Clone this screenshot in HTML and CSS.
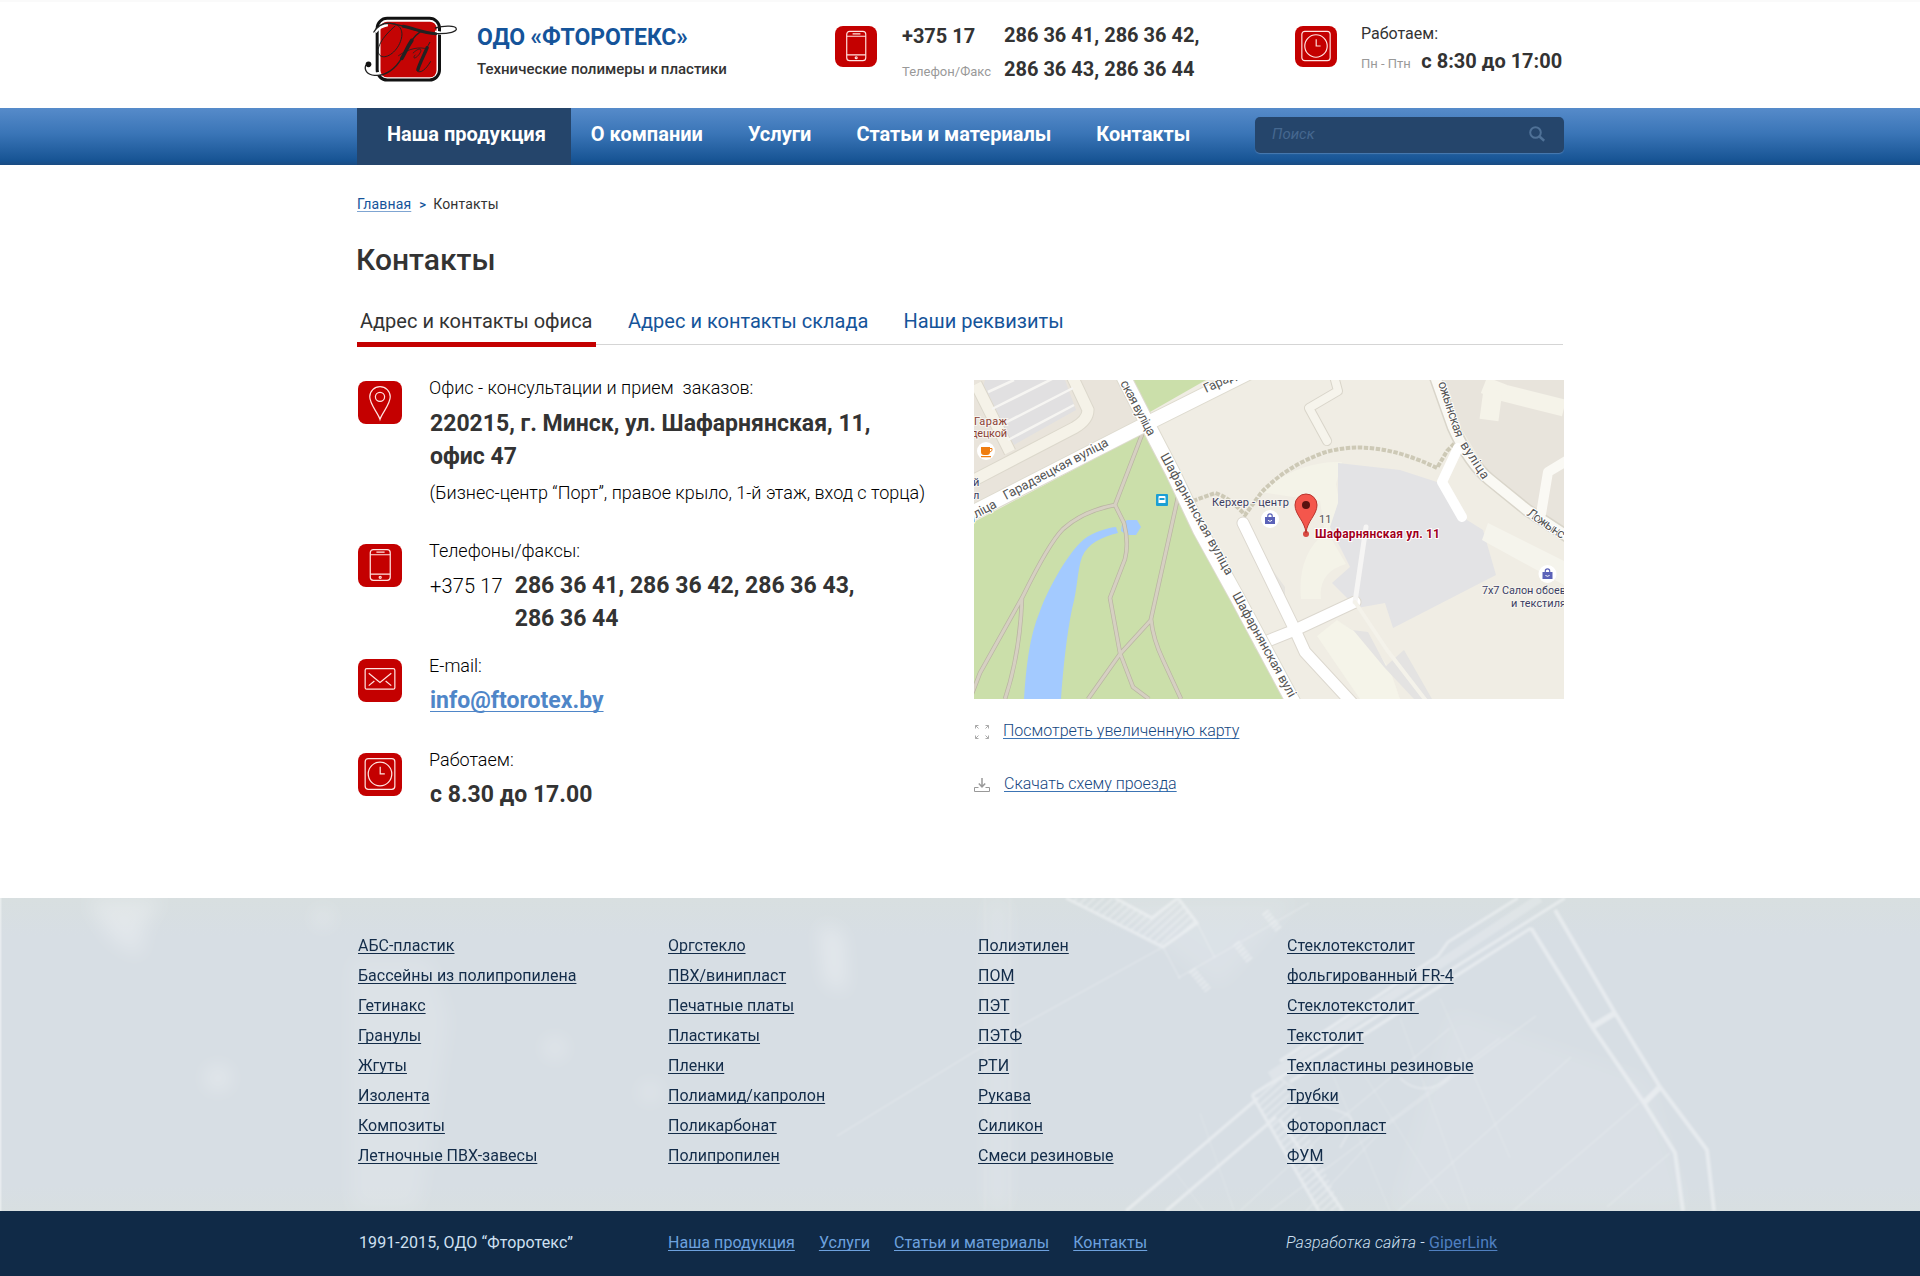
FILE: index.html
```html
<!DOCTYPE html>
<html lang="ru">
<head>
<meta charset="utf-8">
<title>Контакты — ОДО «Фторотекс»</title>
<link rel="stylesheet" href="styles.css">
</head>
<body>
<svg class="sprite" width="0" height="0">
  <symbol id="i-phone" viewBox="0 0 42 42">
    <rect x="11.5" y="5.5" width="19.500" height="30" rx="3"/>
    <path d="M11.500 10.500h19.500M11.500 29.500h19.500M17.500 8h8"/>
    <circle cx="21.200" cy="32.500" r="1"/>
  </symbol>
  <symbol id="i-clock" viewBox="0 0 42 42">
    <rect x="6.500" y="5.500" width="29" height="30" rx="3"/>
    <circle cx="21" cy="20.500" r="11.500"/>
    <path d="M21.200 13.500v7h4.500"/>
  </symbol>
  <symbol id="i-pin" viewBox="0 0 42 42">
    <path d="M21 37.500C19 31 11 23 11 15.500a10 10 0 0 1 20 0C31 23 23 31 21 37.500z"/>
    <circle cx="21" cy="15.500" r="4.500"/>
  </symbol>
  <symbol id="i-mail" viewBox="0 0 42 42">
    <rect x="6.500" y="9.500" width="29" height="20" rx="1.500"/>
    <path d="M10 14l11 9 11-9M10 26l5.500-4.500M32 26l-5.500-4.500"/>
  </symbol>
  <symbol id="i-bag" viewBox="0 0 12 12">
    <path d="M3.800 5V3.500a2.200 2.200 0 0 1 4.400 0V5" fill="none" stroke="#5b62b8" stroke-width="1.200"/>
    <path d="M1 4.500h10v7H1z" fill="#5b62b8"/>
    <path d="M4 7.500c.8 1.700 3.200 1.700 4 0" fill="none" stroke="#fff"/>
  </symbol>
</svg>

<header class="header">
  <div class="wrap header__row">
    <div class="brand">
      <svg class="brand__logo" viewBox="70 40 290 210" fill="none">
        <rect x="112" y="56" width="187" height="185" rx="30" stroke="#111" stroke-width="9"/>
        <rect x="122" y="66" width="168" height="167" rx="20" fill="#c40404"/>
        <g stroke="#fff" stroke-width="9">
          <path d="M106 97q14-18 38-22M285 97q46 12 62-8M80 195c-4 22 12 32 40 26"/>
        </g>
        <g stroke="#222" stroke-linecap="round">
          <path d="M102 97q18-29 50-26c50 6 82 30 138 31 38 1 64-6 59-16-5-11-42-6-62-1" stroke-width="4"/>
          <path d="M190 80c35 6 58 20 98 22" stroke-width="9"/>
          <path d="M150 71c36 0 42 28 32 54-12 34-46 56-62 42-16-18 8-56 46-88" stroke-width="3"/>
          <path d="M242 96c-28 18-44 54-56 78-18 34-50 56-82 53-22-2-32-16-26-30" stroke-width="4"/>
          <path d="M216 122c-14 20-18 34-30 54" stroke-width="11"/>
          <path d="M270 128c-14 26-32 62-38 86 10 8 26-4 40-28" stroke-width="3"/>
          <path d="M262 144c-10 24-22 46-28 66" stroke-width="10"/>
          <path d="M176 168c30-22 66-28 84-20M220 160c20-20 30-12 18 4s-22 12-12 2" stroke-width="2.500"/>
        </g>
        <circle cx="86" cy="194" r="8.500" fill="#111"/>
      </svg>
      <div class="brand__text">
        <div class="brand__name">ОДО «ФТОРОТЕКС»</div>
        <div class="brand__tagline">Технические полимеры и пластики</div>
      </div>
    </div>
    <div class="hphones">
      <svg class="badge badge--sm"><use href="#i-phone"/></svg>
      <div class="hphones__grid">
        <b class="hphones__code">+375 17</b><b>286 36 41, 286 36 42,</b>
        <small>Телефон/Факс</small><b>286 36 43, 286 36 44</b>
      </div>
    </div>
    <div class="hhours">
      <svg class="badge badge--sm"><use href="#i-clock"/></svg>
      <div class="hhours__text">
        <div class="hhours__label">Работаем:</div>
        <div class="hhours__time"><small>Пн - Птн</small><b>с 8:30 до 17:00</b></div>
      </div>
    </div>
  </div>
</header>

<nav class="nav">
  <div class="wrap nav__row">
    <a class="nav__link nav__link--active" href="#">Наша продукция</a>
    <a class="nav__link" href="#">О компании</a>
    <a class="nav__link" href="#">Услуги</a>
    <a class="nav__link" href="#">Статьи и материалы</a>
    <a class="nav__link" href="#">Контакты</a>
    <form class="search">
      <input class="search__input" type="text" placeholder="Поиск">
      <svg class="search__icon" viewBox="0 0 16 16" fill="none" stroke="#4f7197" stroke-width="2"><circle cx="6.500" cy="6.500" r="5.300"/><path d="M10.500 10.500l4.700 4.200" stroke-width="2.500"/></svg>
    </form>
  </div>
</nav>

<main class="wrap main">
  <div class="crumbs"><a href="#">Главная</a><i>&gt;</i><span>Контакты</span></div>
  <h1 class="title">Контакты</h1>
  <div class="tabs">
    <a class="tabs__item tabs__item--active" href="#">Адрес и контакты офиса</a>
    <a class="tabs__item" href="#">Адрес и контакты склада</a>
    <a class="tabs__item" href="#">Наши реквизиты</a>
  </div>

  <div class="cols">
    <div class="contacts">
      <section class="contact">
        <svg class="badge"><use href="#i-pin"/></svg>
        <div>
          <div class="contact__label">Офис - консультации и прием  заказов:</div>
          <div class="contact__value contact__value--address">220215, г. Минск, ул. Шафарнянская, 11,<br>офис 47</div>
          <div class="contact__note">(Бизнес-центр “Порт”, правое крыло, 1-й этаж, вход с торца)</div>
        </div>
      </section>
      <section class="contact">
        <svg class="badge"><use href="#i-phone"/></svg>
        <div>
          <div class="contact__label">Телефоны/факсы:</div>
          <div class="contact__value contact__value--phones"><span class="contact__code">+375 17</span><span>286 36 41, 286 36 42, 286 36 43,<br>286 36 44</span></div>
        </div>
      </section>
      <section class="contact">
        <svg class="badge"><use href="#i-mail"/></svg>
        <div>
          <div class="contact__label">E-mail:</div>
          <div class="contact__value"><a href="#">info@ftorotex.by</a></div>
        </div>
      </section>
      <section class="contact">
        <svg class="badge"><use href="#i-clock"/></svg>
        <div>
          <div class="contact__label">Работаем:</div>
          <div class="contact__value">с 8.30 до 17.00</div>
        </div>
      </section>
    </div>

    <div class="side">
      <svg class="map" viewBox="0 0 590 319" fill="none">
        <rect width="590" height="319" fill="#f0ede4"/>
        <!-- blocks -->
        <path d="M0 0h150l18 42L0 126z" fill="#e9e4db"/>
        <path d="M466 0h124v152l-40-28-40-38-28-46z" fill="#e8e4dc"/>
        <path d="M0 142L169 53l12 8 138 258H0zM155 0h77l-56 32z" fill="#cbdfaa"/>
        <!-- garages -->
        <path d="M11 0h80l11 30-62 35L8 10z" fill="#e1e0e1"/>
        <path d="M2 4l34 68M0 100l100-52q14-8 14-18L98-4" stroke="#dcd8cc" stroke-width="13"/>
        <path d="M2 4l34 68M0 100l100-52q14-8 14-18L98-4" stroke="#f5f2e8" stroke-width="11"/>
        <path d="M14 12l26-12M18 29l68-34M27 45l72-37M34 60l66-35" stroke="#f6f5f2" stroke-width="2.500"/>
        <!-- right side buildings -->
        <path d="M286 112q40-32 82-30l-6 22 4 22-8 34 14 24q-28 8-25 35h-20q-4-44 24-66l-5-32z" fill="#f4f3e8"/>
        <path d="M364 83l62 7 40 13 27 37 16 10 13 45-103 53-8-25-28 5-25-25 18-16-20-40 8-24z" fill="#e3e3e5"/>
        <path d="M343 256l20-16 34 22 19 28 10 29h-40l-26-38z" fill="#f5f4e9"/>
        <path d="M362 240l16 10 16 2 18 34 18-16 28 49h-18l-30-32-30-36z" fill="#e4e3e2"/>
        <path d="M514 143l76 38v24l-82-45z" fill="#f5f4ec"/>
        <path d="M510 5l20 8 60 15" stroke="#f5f3e9" stroke-width="17"/>
        <path d="M519 10l-4 30" stroke="#f5f3e9" stroke-width="19"/>
        <path d="M275 155l32 60-4 6-28-50zM289 177l22 30v22z" fill="#e6e4df"/>
        <!-- park water and paths -->
        <g fill="#a3caff">
          <path d="M50 319c2-30 5-62 16-88 8-22 26-54 40-68 8-9 25-15 36-16l2 6c-16 4-30 10-36 24-5 14-4 30-10 52-5 24-9 60-11 90z"/>
          <path d="M148 144l5-4h10l4 7-5 8h-9l-6-4z"/>
        </g>
        <path d="M169 52l-28 73 9 18q5 20 1 36l-15 39 10 55 13 34 16 12M141 125q-32 6-52 24-14 14-40 67L6 293l-10 26M48 218q-2 56-17 101M204 117l-27 122q2 20 12 41l18 39M177 240l-31 34-32 45" stroke="#b9b4a2" stroke-width="4.400"/>
        <path d="M169 52l-28 73 9 18q5 20 1 36l-15 39 10 55 13 34 16 12M141 125q-32 6-52 24-14 14-40 67L6 293l-10 26M48 218q-2 56-17 101M204 117l-27 122q2 20 12 41l18 39M177 240l-31 34-32 45" stroke="#d6d0c2" stroke-width="3"/>
        <!-- footpath -->
        <path d="M219 121l22-8q14 4 30 22l16-22q24-26 62-40 50-16 114 15l10-17 10-10" stroke="#cdc9b6" stroke-width="4" stroke-dasharray="4.500 1.500"/>
        <!-- streets -->
        <g stroke-linecap="round" stroke-linejoin="round">
          <path d="M458-12l21 59q16 36 37 53l37 30 46 30" stroke="#d9d5ca" stroke-width="13"/>
          <path d="M458-12l21 59q16 36 37 53l37 30 46 30M594 80l-20 12-7 42" stroke="#faf9f4" stroke-width="10"/>
          <path d="M360-4l4 15-29 17 18 33" stroke="#d9d5ca" stroke-width="10"/>
          <path d="M360-4l4 15-29 17 18 33" stroke="#f6f4ec" stroke-width="8"/>
          <path d="M269 143l52 107 10 22 48 52M286 264l35-14 60-28" stroke="#dcd8cf" stroke-width="13"/>
          <path d="M269 143l52 107 10 22 48 52M286 264l35-14 60-28" stroke="#fff" stroke-width="11"/>
          <path d="M381 222l11-75" stroke="#f6f5f4" stroke-width="5"/>
          <path d="M381 222l32 48 40 52" stroke="#f4f2ea" stroke-width="4"/>
          <path d="M484 68l-16 34 20 35" stroke="#fff" stroke-width="10"/>
          <path d="M-8 136l176-90 110-55M147-8l26 51 26 50 27 57 37 67 60 112" stroke="#dedbcf" stroke-width="16"/>
          <path d="M-8 136l176-90 110-55M147-8l26 51 26 50 27 57 37 67 60 112" stroke="#fff" stroke-width="14"/>
        </g>
        <!-- street names -->
        <g class="map__street">
          <text transform="translate(-3 141) rotate(-28)" textLength="30">уліца</text>
          <text transform="translate(32 120) rotate(-28)" textLength="117">Гарадзецкая вуліца</text>
          <text transform="translate(232 13) rotate(-25)" textLength="34">Гарад</text>
          <text transform="translate(146 3) rotate(62)" textLength="61">ская вуліца</text>
          <text transform="translate(186 76) rotate(61)" textLength="137">Шафарнянская вуліца</text>
          <text transform="translate(258 215) rotate(61)" textLength="118">Шафарнянская вулі</text>
          <text transform="translate(464 3) rotate(72)" textLength="58">ожынская</text>
          <text transform="translate(486 65) rotate(57)" textLength="42">вуліца</text>
          <text transform="translate(552 135) rotate(34)" textLength="43">Ложынс</text>
        </g>
        <!-- points of interest -->
        <g fill="#fff">
          <circle cx="12" cy="71" r="9"/><circle cx="296" cy="139" r="9"/><circle cx="573.500" cy="194" r="9"/>
        </g>
        <path d="M7 67h9v5a3 3 0 0 1-3 3h-3a3 3 0 0 1-3-3zM7 76h10v1.200H7z" fill="#ef7d10"/>
        <path d="M16 68.500h2v2l-2 1.500" stroke="#ef7d10"/>
        <use href="#i-bag" x="290" y="132.500" width="12" height="12"/>
        <use href="#i-bag" x="567.500" y="187.500" width="12" height="12"/>
        <rect x="182" y="114" width="12" height="12" rx="1" fill="#1c9fd4"/>
        <path d="M184.500 117q0-1 1-1h5q1 0 1 1v6h-7z" fill="#fff"/>
        <path d="M185.500 118h5v2h-5z" fill="#1c9fd4"/>
        <g class="map__poi">
          <text x="0" y="45" textLength="33" fill="#8a4034">Гараж</text>
          <text x="-3" y="57" textLength="36" fill="#8a4034">децкой</text>
          <text x="-1" y="106">й</text>
          <text x="-1" y="119">л</text>
          <text x="238" y="126" textLength="77">Керхер - центр</text>
          <text x="345" y="142.500" fill="#555">11</text>
          <text x="508" y="214" textLength="84">7x7 Салон обоев</text>
          <text x="537" y="227" textLength="55">и текстиля</text>
        </g>
        <circle cx="332" cy="154" r="3" fill="#d84a42"/>
        <path d="M332 153c-1-12-11-18-11-28a11 11 0 0 1 22 0c0 10-10 16-11 28z" fill="#f4564c" stroke="#b8332c"/>
        <circle cx="332" cy="125" r="4" fill="#5a120f"/>
        <text class="map__address" x="341" y="158" textLength="125">Шафарнянская ул. 11</text>
      </svg>
      <div class="side__link">
        <svg viewBox="0 0 16 16" fill="none" stroke="#aaa"><path d="M1.500 4.500v-3h3M1.500 1.500l3 3M11.500 1.500h3v3M14.500 1.500l-3 3M1.500 11.500v3h3M1.500 14.500l3-3M14.500 11.500v3h-3M14.500 14.500l-3-3"/></svg>
        <a href="#">Посмотреть увеличенную карту</a>
      </div>
      <div class="side__link side__link--download">
        <svg viewBox="0 0 16 16" fill="none" stroke="#999"><path d="M4.500 10.500h-4v4h15v-4h-4"/><path d="M8 1v8.500M4.800 6.500L8 9.800l3.200-3.300" stroke-width="1.500"/></svg>
        <a href="#">Скачать схему проезда</a>
      </div>
    </div>
  </div>
</main>

<footer>
  <div class="catalog">
    <svg class="catalog__bg" viewBox="0 0 1920 313" fill="none" stroke="#fff">
      <defs>
        <filter id="soft" x="-20%" y="-20%" width="140%" height="140%"><feGaussianBlur stdDeviation="10"/></filter>
        <filter id="slight"><feGaussianBlur stdDeviation=".8"/></filter>
        <pattern id="hatch" width="6" height="6" patternUnits="userSpaceOnUse" patternTransform="rotate(48)"><path d="M0 0v6" stroke="#fff" stroke-width="3"/></pattern>
      </defs>
      <path d="M.5 0v313" stroke-width="2" opacity=".4"/>
      <g filter="url(#soft)" stroke="none" fill="#fff" opacity=".35">
        <path d="M85 0h80l-20 25-5 35-30-20z" opacity=".8"/>
        <circle cx="218" cy="180" r="12"/><circle cx="323" cy="20" r="9"/>
        <path d="M350 60h80l20 60-30 193h-70z" opacity=".4"/>
        <circle cx="555" cy="150" r="10"/><circle cx="650" cy="194" r="9"/>
        <path d="M820 25l22 10 4 60-20-10z"/>
        <path d="M985 0h25v313h-25z" opacity=".4"/>
        <path d="M1100 0h200l-80 90z" opacity=".35"/>
        <path d="M1450 110l200 70 40 133h-300z" opacity=".25"/>
      </g>
      <g filter="url(#slight)" opacity=".4">
        <path d="M1066 0l97 49 34-24-19-25-26 20-37-20z" fill="url(#hatch)" stroke="none"/>
        <path d="M1252 197l28-22 63 138h-24z" fill="url(#hatch)" stroke="none"/>
        <path d="M1066 0l97 49 34-24-19-25M1115 0l37 20 26-20M1252 197l67 116M1280 222l63 91" stroke-width="3"/>
        <path d="M1163 49l17 32M1197 25l18 35M1178 80L1309 5M837 238l140-86L1163 49"/>
        <path d="M985 0v313M1010 0v313" opacity=".5"/>
        <path d="M1265 14l14 18M1236 45l14 18M1192 72l16 20" stroke-width="8" stroke-dasharray="2 2"/>
        <path d="M1565 0L1252 197" stroke-width="3"/>
        <path d="M1518 0l-70 44-10 14-158 105" stroke-width="3"/>
        <path d="M1540 0L1270 178" stroke-width="9" opacity=".5"/>
        <path d="M1531 30L1290 184M1258 200l-132 113M1276 219l-110 94" stroke-width="3"/>
        <path d="M1531 30l61 99 52 76 31 50 8 58M1555 12l60 103 45 74 47 63 7 61" stroke-width="4"/>
        <path d="M1592 129l23-14M1644 205l16-16" stroke-width="6"/>
        <path d="M1571 159l-173 154M1639 205l-126 108M1670 255l-63 54M1500 140l-230 173M1536 118l-150 110-80 85M1450 130l-120 100-90 83"/>
        <path d="M1200 215l34 98M1176 275l28 38M1330 170l60 143M1400 120l70 193M1440 100l70 160M1360 170l90 143" opacity=".6"/>
        <path d="M1280 180c60 50 90 20 60 70M1400 180c20 20 50 10 60-20" stroke-width="2" opacity=".7"/>
      </g>
    </svg>
    <div class="wrap catalog__grid">
      <ul><li><a href="#">АБС-пластик</a></li><li><a href="#">Бассейны из полипропилена</a></li><li><a href="#">Гетинакс</a></li><li><a href="#">Гранулы</a></li><li><a href="#">Жгуты</a></li><li><a href="#">Изолента</a></li><li><a href="#">Композиты</a></li><li><a href="#">Летночные ПВХ-завесы</a></li></ul>
      <ul><li><a href="#">Оргстекло</a></li><li><a href="#">ПВХ/винипласт</a></li><li><a href="#">Печатные платы</a></li><li><a href="#">Пластикаты</a></li><li><a href="#">Пленки</a></li><li><a href="#">Полиамид/капролон</a></li><li><a href="#">Поликарбонат</a></li><li><a href="#">Полипропилен</a></li></ul>
      <ul><li><a href="#">Полиэтилен</a></li><li><a href="#">ПОМ</a></li><li><a href="#">ПЭТ</a></li><li><a href="#">ПЭТФ</a></li><li><a href="#">РТИ</a></li><li><a href="#">Рукава</a></li><li><a href="#">Силикон</a></li><li><a href="#">Смеси резиновые</a></li></ul>
      <ul><li><a href="#">Стеклотекстолит</a></li><li><a href="#">фольгированный FR-4</a></li><li><a href="#">Стеклотекстолит&nbsp;</a></li><li><a href="#">Текстолит</a></li><li><a href="#">Техпластины резиновые</a></li><li><a href="#">Трубки</a></li><li><a href="#">Фоторопласт</a></li><li><a href="#">ФУМ</a></li></ul>
    </div>
  </div>
  <div class="bottom">
    <div class="wrap bottom__grid">
      <div class="bottom__copy">1991-2015, ОДО “Фторотекс”</div>
      <div class="bottom__nav"><a href="#">Наша продукция</a><a href="#">Услуги</a><a href="#">Статьи и материалы</a><a href="#">Контакты</a></div>
      <div class="bottom__dev"><i>Разработка сайта - </i><a href="#">GiperLink</a></div>
    </div>
  </div>
</footer>
</body>
</html>
```
FILE: styles.css
```css
* { box-sizing: border-box; }
body { margin: 0; background: #fff; color: #333; font-family: Roboto, sans-serif; }
ul { list-style: none; margin: 0; padding: 0; }
a { text-decoration-thickness: 1px; text-decoration-skip-ink: none; text-underline-offset: 2px; }
.sprite { display: block; height: 0; }
.wrap { width: 1206px; margin: 0 auto; }

.badge {
  display: block; flex: none; width: 44px; height: 43px;
  background: #c40000; border-radius: 8px;
  fill: none; stroke: #ffe3e0; stroke-width: 1.2;
}
.badge--sm { width: 42px; height: 41px; }

/* header */
.header { height: 108px; border-top: 2px solid #fafafa; }
.header__row { display: grid; grid-template-columns: 478px 460px 1fr; }
.brand { display: flex; padding: 11px 0 0 6px; }
.brand__logo { width: 97px; height: 70px; margin-right: 17px; }
.brand__text { padding-top: 11px; }
.brand__name { font-size: 23px; line-height: 28px; font-weight: 700; letter-spacing: -.1px; color: #15549a; }
.brand__tagline { margin-top: 7px; font-size: 15px; line-height: 20px; font-weight: 500; }
.hphones { display: flex; padding-top: 24px; }
.hphones__grid {
  display: grid; grid-template-columns: 102px auto; align-items: baseline;
  margin: -7px 0 0 25px; font-size: 20px; line-height: 33px;
}
.hphones__code { align-self: start; padding-top: 1px; }
.header small { font-size: 13px; color: #999; }
.hhours { display: flex; padding-top: 24px; }
.hhours__text { margin: -2px 0 0 24px; }
.hhours__label { font-size: 16px; line-height: 20px; }
.hhours__time { margin-top: 3px; font-size: 20px; line-height: 28px; white-space: nowrap; }
.hhours__time small { margin-right: 10.500px; }

/* navigation */
.nav { height: 57px; background: linear-gradient(#568bca, #3a75b7 45%, #175494 92%, #1a4b82); }
.nav__row { display: flex; height: 57px; }
.nav__link {
  margin-right: 45px; font-size: 20px; line-height: 53px; font-weight: 700;
  color: #fff; text-decoration: none; white-space: nowrap;
}
.nav__link--active { margin-right: 20px; padding: 0 25px 4px 30px; background: #25456b; }
.search {
  display: flex; align-items: center; width: 309px; height: 36px;
  margin: 9px -1px 0 auto; padding: 0 19px 0 17px;
  background: #25456b; border-radius: 5px; box-shadow: 0 1px 1px #4a7ab1;
}
.search__input {
  flex: 1; min-width: 0; padding: 0 0 2px; border: 0; background: none; color: #fff;
  font: italic 15px/20px Roboto, sans-serif;
}
.search__input::placeholder { color: #456890; opacity: 1; }
.search__icon { width: 16px; height: 16px; margin-bottom: 2px; }

/* page */
.main { height: 733px; padding-top: 29px; }
.crumbs { font-size: 14px; line-height: 20px; letter-spacing: .15px; }
.crumbs a { color: #15549a; text-decoration-color: #7fa5d2; text-underline-offset: 2px; }
.crumbs i { margin: 0 7px 0 8px; font-style: normal; font-size: 13px; font-weight: 500; color: #15549a; }
.title { margin: 27px 0 29px -1px; font-size: 30px; line-height: 36px; font-weight: 500; }
.tabs { display: flex; height: 38px; gap: 32px; border-bottom: 1px solid #d5d5d5; }
.tabs__item { height: 40px; font-size: 20px; line-height: 28px; color: #15549a; text-decoration: none; }
.tabs__item--active { width: 239px; padding-left: 3px; border-bottom: 5px solid #c40000; color: #333; }
.tabs__item:last-child { margin-left: 3px; }
.cols { display: grid; grid-template-columns: 617px 590px; padding-top: 32px; }

.contacts { display: grid; grid-template-rows: 163px 115px 94px auto; }
.contact { display: flex; gap: 27px; padding-left: 1px; }
.contact .badge { margin-top: 4px; }
.contact__label, .contact__note { font-size: 18px; line-height: 24px; font-weight: 300; color: #000; white-space: pre; }
.contact__label { margin-top: -1px; }
.contact__note { margin: 8px 0 0 .5px; }
.contact__value { margin: 6px 0 0 1px; font-size: 23px; line-height: 33px; font-weight: 700; white-space: nowrap; }
.contact__value--address { margin-top: 7px; }
.contact__value a { color: #4f86c8; text-underline-offset: 3px; }
.contact__value--phones { display: flex; gap: 12px; }
.contact__code { font-size: 20px; line-height: 35px; font-weight: 300; letter-spacing: .15px; color: #000; }

.side { padding-top: 3px; }
.map { display: block; width: 590px; height: 319px; overflow: hidden; margin-bottom: 22px; }
.map text { font-family: Roboto, sans-serif; }
.map__street { font-size: 13px; fill: #555; stroke: #fff; stroke-width: 2px; paint-order: stroke; }
.map__poi { font-size: 11px; fill: #3a3d63; stroke: #f6f4ee; stroke-width: 2px; paint-order: stroke; }
.map__address { font-size: 12px; font-weight: 700; fill: #a1001c; stroke: #fff; stroke-width: 2px; paint-order: stroke; }
.side__link { display: flex; gap: 13px; height: 53px; font-size: 16px; line-height: 20px; font-weight: 300; }
.side__link--download { gap: 14px; }
.side__link svg { width: 16px; height: 16px; margin-top: 3px; }
.side__link a { color: #15477f; text-decoration-color: #3c74b4; }

/* footer */
.catalog { position: relative; height: 313px; overflow: hidden; background: linear-gradient(#d8dfe0, #d7dee4 12%, #d7dee4 92%, #d8dfe1); }
.catalog__bg { position: absolute; inset: 0; width: 1920px; height: 313px; }
.catalog__grid { position: relative; display: grid; grid-template-columns: 310px 310px 309px auto; padding: 33px 0 0 1px; }
.catalog li { height: 30px; font-size: 16px; line-height: 30px; }
.catalog a { color: #132c49; }
.bottom { height: 65px; background: #102a47; color: #cfe0f2; font-size: 16px; line-height: 20px; }
.bottom__grid { display: grid; grid-template-columns: 309px 618px auto; padding: 22px 0 0 2px; }
.bottom a { color: #6da1de; }
.bottom__copy { letter-spacing: .1px; }
.bottom__nav { display: flex; gap: 24px; letter-spacing: .07px; }
.bottom__dev i { font-weight: 300; }
.bottom__dev { letter-spacing: .15px; }
.bottom__dev a { color: #4f7fc0; }
```
